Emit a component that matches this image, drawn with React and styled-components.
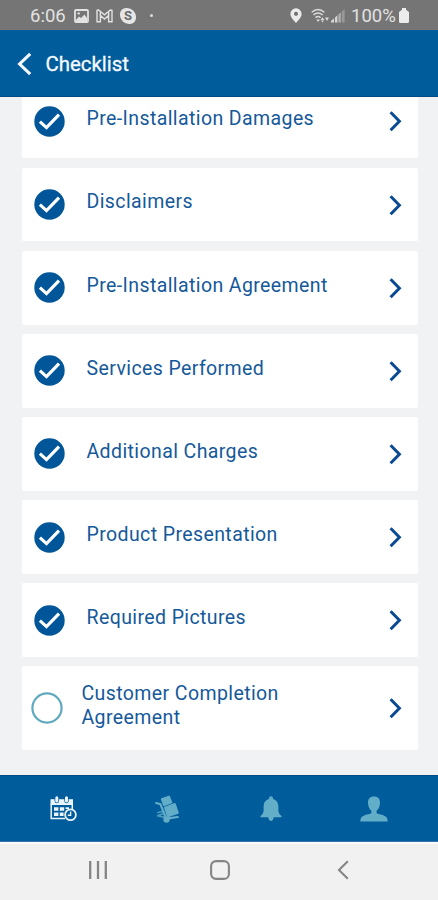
import React from 'react';
import styled, { createGlobalStyle } from 'styled-components';

const GlobalStyle = createGlobalStyle`
  * {
    box-sizing: border-box;
  }
  body {
    margin: 0;
    font-family: Roboto, 'Liberation Sans', sans-serif;
  }
  svg {
    display: block;
    flex-shrink: 0;
  }
`;

const Screen = styled.div`
  width: 438px;
  height: 900px;
  display: flex;
  flex-direction: column;
  overflow: hidden;
  background: #f1f2f4;
`;

const StatusBar = styled.div`
  height: 30px;
  flex-shrink: 0;
  display: flex;
  align-items: center;
  justify-content: space-between;
  padding: 1px 29px 0 30px;
  background: #757575;
  color: #e2e2e2;
  font-size: 18.5px;
  line-height: 30px;
`;

const StatusGroup = styled.div`
  display: flex;
  align-items: center;
`;

const StatusText = styled.span`
  width: ${(p) => p.$width}px;
  white-space: nowrap;
`;

const Slot = styled.span`
  margin-left: ${(p) => p.$gap}px;
`;

const Header = styled.header`
  height: 67px;
  flex-shrink: 0;
  display: flex;
  align-items: center;
  gap: 13.5px;
  padding: 2px 0 0 17px;
  background: #005c9b;
  border-bottom: 1px solid #004b86;
  color: #f4f9ff;
`;

const Title = styled.h1`
  margin: 0;
  padding-bottom: 1px;
  font-size: 20.4px;
  font-weight: 400;
  line-height: 26px;
  -webkit-text-stroke: 0.3px #f4f9ff;
`;

const List = styled.main`
  flex: 1;
  min-height: 0;
  overflow: hidden;
  padding: 0 20.5px 0 21.5px;
`;

const Cards = styled.div`
  display: flex;
  flex-direction: column;
  gap: 9.45px;
  margin-top: -12.4px;
`;

const Card = styled.div`
  height: ${(p) => (p.$tall ? 83.5 : 73.7)}px;
  display: flex;
  align-items: center;
  padding: 0 16px 0 ${(p) => (p.$tall ? 9 : 12)}px;
  background: #fff;
  border-radius: 2px;
`;

const Label = styled.div`
  flex: 1;
  margin-left: ${(p) => (p.$tall ? 19 : 22)}px;
  padding-bottom: 5px;
  max-width: ${(p) => (p.$tall ? '230px' : 'none')};
  color: #15599a;
  font-size: 19.5px;
  line-height: 23.4px;
  letter-spacing: 0.4px;
`;

const Arrow = styled.div`
  margin-left: auto;
`;

const TabBar = styled.nav`
  height: 67px;
  flex-shrink: 0;
  display: grid;
  grid-template-columns: repeat(4, 103.5px);
  justify-content: center;
  align-items: center;
  padding: 1px 0 0;
  background: #005c9b;
  border-top: 1px solid #004b86;
  border-bottom: 1px solid #3672ac;
`;

const Tab = styled.div`
  display: flex;
  justify-content: center;
  color: ${(p) => (p.$active ? '#e9f4ff' : '#62adc8')};
`;

const SystemNav = styled.div`
  height: 58px;
  flex-shrink: 0;
  display: grid;
  grid-template-columns: repeat(3, 122.5px);
  justify-content: center;
  align-items: center;
  justify-items: center;
  padding: 0 0 4px 2px;
  background: #f1f1f1;
  border-top: 2px solid #fbfbfb;
`;

const items = [
  { label: 'Pre-Installation Damages', done: true },
  { label: 'Disclaimers', done: true },
  { label: 'Pre-Installation Agreement', done: true },
  { label: 'Services Performed', done: true },
  { label: 'Additional Charges', done: true },
  { label: 'Product Presentation', done: true },
  { label: 'Required Pictures', done: true },
  { label: 'Customer Completion Agreement', done: false },
];

const PictureIcon = () => (
  <svg width='15' height='14' viewBox='0 0 15 14'>
    <rect x='1' y='1' width='13' height='12' rx='1' fill='none' stroke='#e2e2e2' strokeWidth='1.8' />
    <path d='M2 11 5 7.5 7 9 10.5 5.5 13 9V12H2Z' fill='#e2e2e2' />
    <circle cx='4.7' cy='4.4' r='1.2' fill='#e2e2e2' />
  </svg>
);

const MailIcon = () => (
  <svg width='17' height='14' viewBox='0 0 17 14' fill='none' stroke='#e2e2e2' strokeWidth='1.4'>
    <path d='M1 12.8V1.4L2.6 1 8.5 5.8 14.4 1 16 1.4V12.8H12.6V6.5L8.5 10 4.4 6.5V12.8Z' />
    <path d='M4.4 6.5V3M12.6 6.5V3' />
  </svg>
);

const SkypeText = styled.span`
  display: block;
  width: 16px;
  height: 16px;
  border-radius: 6px 9px 6px 9px;
  background: #e6e6e6;
  color: #696969;
  font-size: 13px;
  font-weight: 700;
  line-height: 16px;
  text-align: center;
`;

const Dot = styled.span`
  display: block;
  width: 3px;
  height: 3px;
  border-radius: 50%;
  background: #dcdcdc;
`;

const PinIcon = () => (
  <svg width='12' height='15' viewBox='0 0 12 15'>
    <path
      fill='#ececec'
      fillRule='evenodd'
      d='M6 .3A5.6 5.6 0 0 0 .4 5.9C.4 9.5 6 14.8 6 14.8S11.6 9.5 11.6 5.9A5.6 5.6 0 0 0 6 .3ZM6 3.7a2.1 2.1 0 1 1 0 4.2 2.1 2.1 0 0 1 0-4.2Z'
    />
  </svg>
);

const WifiIcon = () => (
  <svg width='18' height='15' viewBox='0 0 18 15' fill='none' stroke='#d9d9d9' strokeWidth='1.5'>
    <path d='M.7 4.3Q7-1.2 13.4 4.3M2.4 7Q7 3 11.7 7M4.4 9.7Q7 7.3 9.6 9.7' />
    <path d='M5.2 11.4H9L7.1 14Z' fill='#d9d9d9' stroke='none' />
    <path d='M9.5 12 11.5 9.3 13.5 12ZM10 12.6H13L11.5 14.6ZM14 9.5H18L16 13Z' fill='#d9d9d9' stroke='none' />
  </svg>
);

const SignalIcon = () => (
  <svg width='14' height='14' viewBox='0 0 14 14'>
    <path d='M0 13.5V12L3 9.3V13.5ZM4 13.5V8.5L6.4 6.2V13.5Z' fill='#d6d6d6' />
    <path d='M7.4 13.5V5.6L9.8 3.4V13.5Z' fill='#b0b0b0' />
    <path d='M10.8 13.5V2.6L13.6 0V13.5Z' fill='#999' />
  </svg>
);

const BatteryIcon = () => (
  <svg width='10' height='15' viewBox='0 0 10 15'>
    <path d='M3 0H7V1.8L10 4V13.5Q10 15 8.5 15H1.5Q0 15 0 13.5V4L3 1.8Z' fill='#ececec' />
  </svg>
);

const BackIcon = () => (
  <svg width='15' height='24' viewBox='0 0 15 24' fill='none' stroke='#f4f9ff' strokeWidth='3.1'>
    <path d='M13.2 1.8 2.6 12 13.2 22.2' />
  </svg>
);

const CheckedIcon = () => (
  <svg width='31' height='31' viewBox='0 0 31 31'>
    <circle cx='15.5' cy='15.5' r='15.2' fill='#005698' />
    <path d='M5.9 15.6 12.5 21.6 25 8.6' fill='none' stroke='#fff' strokeWidth='3.2' />
  </svg>
);

const EmptyIcon = () => (
  <svg width='32' height='32' viewBox='0 0 32 32'>
    <circle cx='16' cy='16' r='14.6' fill='none' stroke='#5fa9bf' strokeWidth='2.2' />
  </svg>
);

const ChevronIcon = () => (
  <svg width='13' height='22' viewBox='0 0 13 22' fill='none' stroke='#0a4a92' strokeWidth='3'>
    <path d='M1.6 2.2 10.4 11.2 1.6 20.2' />
  </svg>
);

const ScheduleIcon = () => (
  <svg width='27' height='26' viewBox='0 0 27 26'>
    <path d='M.5 3.2H23V9H.5Z' fill='currentColor' />
    <path d='M1.2 8V22.6H15M22.3 8V14' fill='none' stroke='currentColor' strokeWidth='1.5' />
    <path
      d='M4 11.2H8.4V14.8H4ZM9.8 11.2H14.2V14.8H9.8ZM4 16.4H8.4V20H4ZM9.8 16.4H13.6V20H9.8ZM15.6 11.2H19V13H15.6Z'
      fill='currentColor'
    />
    <path d='M6.8 1.8V5M16.5 1.8V5' stroke='#005c9b' strokeWidth='4.4' strokeLinecap='round' />
    <path d='M6.8 1.7V5M16.5 1.7V5' stroke='currentColor' strokeWidth='3' strokeLinecap='round' />
    <circle cx='20.5' cy='18.8' r='5.4' fill='#005c9b' stroke='currentColor' strokeWidth='1.8' />
    <path d='M20.6 15.5V19.2H17.8' fill='none' stroke='currentColor' strokeWidth='1.4' />
  </svg>
);

const DollyIcon = () => (
  <svg width='24' height='29' viewBox='0 0 24 29'>
    <path d='M6.6 4 14 1.4 16.6 7.6 9 10.4Z' fill='currentColor' stroke='currentColor' strokeWidth='1.6' strokeLinejoin='round' />
    <path d='M10 12.6 19.8 9 22.8 17.8 12.8 21.2Z' fill='currentColor' stroke='currentColor' strokeWidth='2' strokeLinejoin='round' />
    <path d='M1.2 8 5.4 9.2 11.2 23.7 22.8 22' fill='none' stroke='currentColor' strokeWidth='2.2' strokeLinecap='round' />
    <path d='M7.8 16.2 2.2 17.8M2 20.6 9.5 22.3M2.2 21 8 18.6' fill='none' stroke='currentColor' strokeWidth='1.7' opacity='0.75' />
    <circle cx='11.5' cy='24.6' r='3.2' fill='currentColor' />
  </svg>
);

const BellIcon = () => (
  <svg width='22' height='26' viewBox='0 0 22 26' fill='currentColor'>
    <path d='M9 2Q9 .3 11 .3T13 2V3C17 4 18.4 7.3 18.4 11V15.4Q18.8 17.8 21.5 20V21.2H.5V20Q3.2 17.8 3.6 15.4V11C3.6 7.3 5 4 9 3Z' />
    <path d='M8.2 21.1H13.8Q13.2 25 11 25T8.2 21.1Z' />
  </svg>
);

const PersonIcon = () => (
  <svg width='28' height='26' viewBox='0 0 28 26' fill='currentColor'>
    <path d='M14 .4C9.8.4 7.8 3 8 7C8.1 10.7 9.6 13.5 11.4 14.8V17.2C8 18.5 2 19 .8 22.4Q.4 24 .3 25.6H27.7Q27.6 24 27.2 22.4C26 19 20 18.5 16.6 17.2V14.8C18.4 13.5 19.9 10.7 20 7C20.2 3 18.2.4 14 .4Z' />
  </svg>
);

const RecentsIcon = () => (
  <svg width='20' height='20' viewBox='0 0 20 20' stroke='#858585' strokeWidth='2.3'>
    <path d='M2.2 1V19M10 1V19M17.8 1V19' />
  </svg>
);

const HomeIcon = () => (
  <svg width='20' height='20' viewBox='0 0 20 20'>
    <rect x='1.1' y='1.1' width='17.8' height='17.8' rx='5' fill='none' stroke='#858585' strokeWidth='2.1' />
  </svg>
);

const SystemBackIcon = () => (
  <svg width='12' height='20' viewBox='0 0 12 20' fill='none' stroke='#858585' strokeWidth='2.1'>
    <path d='M10.8 1.3 2 10 10.8 18.7' />
  </svg>
);

const App = () => {
  return (
    <>
      <GlobalStyle />
      <Screen>
        <StatusBar>
          <StatusGroup>
            <StatusText $width={44}>6:06</StatusText>
            <PictureIcon />
            <Slot $gap={7}>
              <MailIcon />
            </Slot>
            <Slot $gap={7}>
              <SkypeText>S</SkypeText>
            </Slot>
            <Slot $gap={14}>
              <Dot />
            </Slot>
          </StatusGroup>
          <StatusGroup>
            <PinIcon />
            <Slot $gap={9}>
              <WifiIcon />
            </Slot>
            <Slot $gap={2}>
              <SignalIcon />
            </Slot>
            <Slot $gap={6}>
              <StatusText $width={48} as='div'>100%</StatusText>
            </Slot>
            <BatteryIcon />
          </StatusGroup>
        </StatusBar>

        <Header>
          <BackIcon />
          <Title>Checklist</Title>
        </Header>

        <List>
          <Cards>
            {items.map((item) => (
              <Card key={item.label} $tall={!item.done}>
                {item.done ? <CheckedIcon /> : <EmptyIcon />}
                <Label $tall={!item.done}>{item.label}</Label>
                <Arrow>
                  <ChevronIcon />
                </Arrow>
              </Card>
            ))}
          </Cards>
        </List>

        <TabBar>
          <Tab $active>
            <ScheduleIcon />
          </Tab>
          <Tab>
            <DollyIcon />
          </Tab>
          <Tab>
            <BellIcon />
          </Tab>
          <Tab>
            <PersonIcon />
          </Tab>
        </TabBar>

        <SystemNav>
          <RecentsIcon />
          <HomeIcon />
          <SystemBackIcon />
        </SystemNav>
      </Screen>
    </>
  );
};

export default App;
